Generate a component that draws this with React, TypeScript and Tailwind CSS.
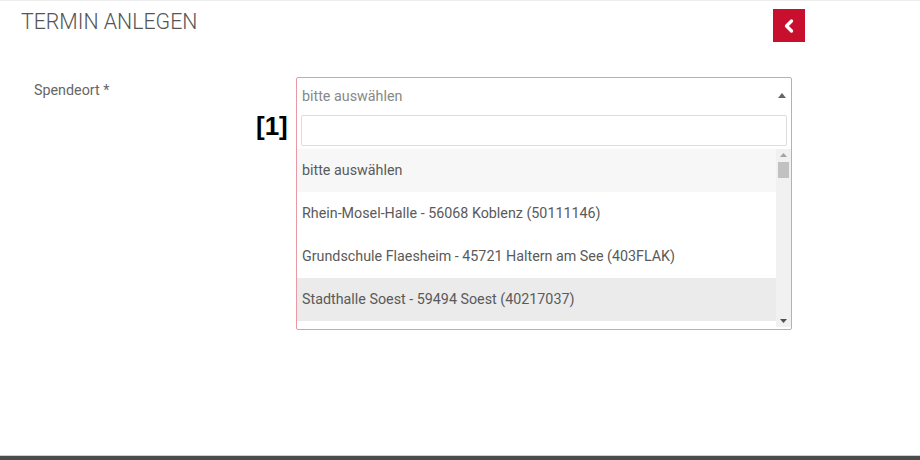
import { ChevronLeft } from 'lucide-react'

const options = [
  'bitte auswählen',
  'Rhein-Mosel-Halle - 56068 Koblenz (50111146)',
  'Grundschule Flaesheim - 45721 Haltern am See (403FLAK)',
  'Stadthalle Soest - 59494 Soest (40217037)',
]

export default function App() {
  return (
    <div className="w-[920px] h-[460px] bg-white flex flex-col font-['Roboto',sans-serif] overflow-hidden">
      <div className="h-px bg-[#eeeeee]" />
      <div className="flex-1 relative">
        <div className="flex items-start justify-between pl-[21px] pr-[115px] pt-[8px]">
          <h1 className="text-[21.3px] font-light text-[#555555] leading-[25px]">TERMIN ANLEGEN</h1>
          <button className="w-[32px] h-[33px] bg-[#c8102e] flex items-center justify-center">
            <ChevronLeft className="w-[20px] h-[20px] text-white" strokeWidth={4} />
          </button>
        </div>

        <div className="flex mt-[35px]">
          <div className="w-[296px] pl-[34px] pt-[3px] text-[14.3px] text-[#666666]">Spendeort *</div>

          <div className="relative w-[496px] h-[253px] border border-[#e79aa4] rounded-[2px] flex flex-col">
            <span className="absolute left-[-41px] top-[35px] text-[26px] font-bold text-black font-['Liberation_Sans',sans-serif] leading-none">[1]</span>

            <div className="h-[37px] flex items-start justify-between pl-[5px] pr-[5px] pt-[9px]">
              <span className="text-[14.3px] text-[#888888] leading-[18px]">bitte auswählen</span>
              <svg className="mt-[6px]" width="8" height="5" viewBox="0 0 8 5"><path d="M0 5 L4 0 L8 5 Z" fill="#666666" /></svg>
            </div>

            <div className="px-[4px]">
              <div className="h-[31px] border border-[#dddddd] rounded-[2px] bg-white" />
            </div>

            <div className="flex mt-[3px] h-[178px]">
              <div className="flex-1 flex flex-col">
                {options.map((o, i) => (
                  <div
                    key={o}
                    className={
                      'h-[43px] shrink-0 flex items-center pl-[5px] text-[14.3px] text-[#5a5a5a] ' +
                      (i === 0 ? 'bg-[#f7f7f7]' : i === 3 ? 'bg-[#ebebeb]' : 'bg-white')
                    }
                  >
                    {o}
                  </div>
                ))}
              </div>
              <div className="w-[15px] bg-[#f1f1f1] flex flex-col items-center justify-between py-[4px]">
                <div className="flex flex-col items-center gap-[5px]">
                  <svg width="7" height="4" viewBox="0 0 7 4"><path d="M0 4 L3.5 0 L7 4 Z" fill="#a3a3a3" /></svg>
                  <div className="w-[11px] h-[16px] bg-[#c1c1c1]" />
                </div>
                <svg width="7" height="4" viewBox="0 0 7 4"><path d="M0 0 L3.5 4 L7 0 Z" fill="#505050" /></svg>
              </div>
            </div>
          </div>
        </div>
      </div>
      <div className="h-px bg-[#d0d0d0]" />
      <div className="h-[4px] bg-[#4b4b4b]" />
    </div>
  )
}
